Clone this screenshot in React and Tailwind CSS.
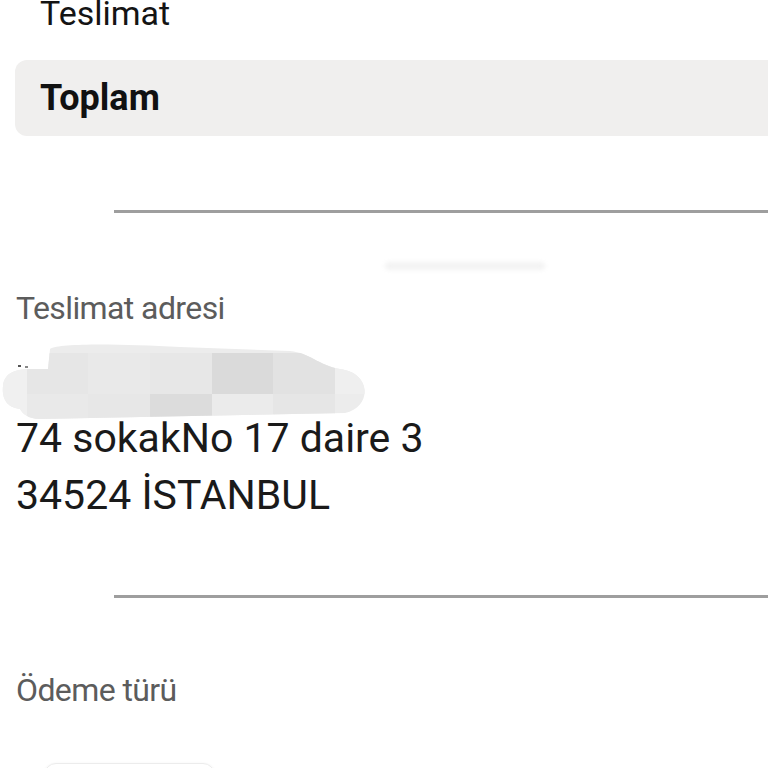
import React from 'react';

const Divider = ({ className = '' }) => (
  <div className={`ml-[114px] h-[3px] bg-[#9e9e9e] ${className}`} />
);

// pixelated smear used to hide the recipient name
const HiddenName = () => (
  <svg width="370" height="80" viewBox="0 0 370 80" className="block">
    <defs>
      <clipPath id="smear">
        <path d="M50 8 C60 2 120 3 180 6 L290 10 C310 12 318 24 340 28 C372 32 372 66 345 72 L40 78 C28 78 22 72 20 68 C4 66 2 54 3 45 C4 33 14 28 30 28 L48 28 Z" />
      </clipPath>
    </defs>
    <g clipPath="url(#smear)">
      <rect x="0" y="0" width="370" height="80" fill="#ececec" />
      <rect x="27" y="12" width="61" height="41" fill="#e6e6e6" />
      <rect x="88" y="12" width="62" height="41" fill="#e9e9e9" />
      <rect x="150" y="12" width="62" height="41" fill="#e7e7e7" />
      <rect x="212" y="12" width="61" height="41" fill="#dadada" />
      <rect x="273" y="12" width="62" height="41" fill="#e2e2e2" />
      <rect x="335" y="12" width="35" height="41" fill="#efefef" />
      <rect x="27" y="53" width="61" height="27" fill="#e9e9e9" />
      <rect x="88" y="53" width="62" height="27" fill="#e7e7e7" />
      <rect x="150" y="53" width="62" height="27" fill="#dcdcdc" />
      <rect x="212" y="53" width="61" height="27" fill="#ebebeb" />
      <rect x="273" y="53" width="62" height="27" fill="#e6e6e6" />
      <rect x="0" y="28" width="27" height="52" fill="#f0f0f0" />
    </g>
    <rect x="18" y="24" width="3" height="2" fill="#555" />
    <rect x="25" y="25" width="3" height="2" fill="#888" />
  </svg>
);

export default function App() {
  return (
    <div className="w-[768px] h-[768px] overflow-hidden bg-white font-['Roboto',sans-serif]">
      <div className="pl-[40px] mt-[-4px] text-[34px] leading-[34px] text-[#141414]">
        Teslimat
      </div>

      <div className="ml-[15px] mt-[30px] h-[76px] rounded-l-xl bg-[#f0efee] flex items-center pl-[25px]">
        <span className="text-[36px] font-bold text-[#111]">Toplam</span>
      </div>

      <Divider className="mt-[74px]" />

      <div className="ml-[385px] mt-[49px] w-[160px] h-[8px] rounded-full bg-[#f3f3f3] blur-[2px]" />

      <div className="pl-[16px] mt-[21px] text-[32px] leading-[34px] text-[#5c5c5c] tracking-[-0.6px]">
        Teslimat adresi
      </div>

      <div className="mt-[16px]">
        <HiddenName />
      </div>

      <div className="pl-[16px] text-[41px] leading-[57px] text-[#1a1a1a] mt-[-11px]">
        <div>74 sokakNo 17 daire 3</div>
        <div>34524 İSTANBUL</div>
      </div>

      <Divider className="mt-[71px]" />

      <div className="pl-[16px] mt-[75px] text-[32px] leading-[34px] text-[#5c5c5c] tracking-[-0.6px]">
        Ödeme türü
      </div>

      <div className="ml-[44px] mt-[56px] w-[171px] h-[40px] rounded-xl border border-[#ececec] shadow-sm" />
    </div>
  );
}
